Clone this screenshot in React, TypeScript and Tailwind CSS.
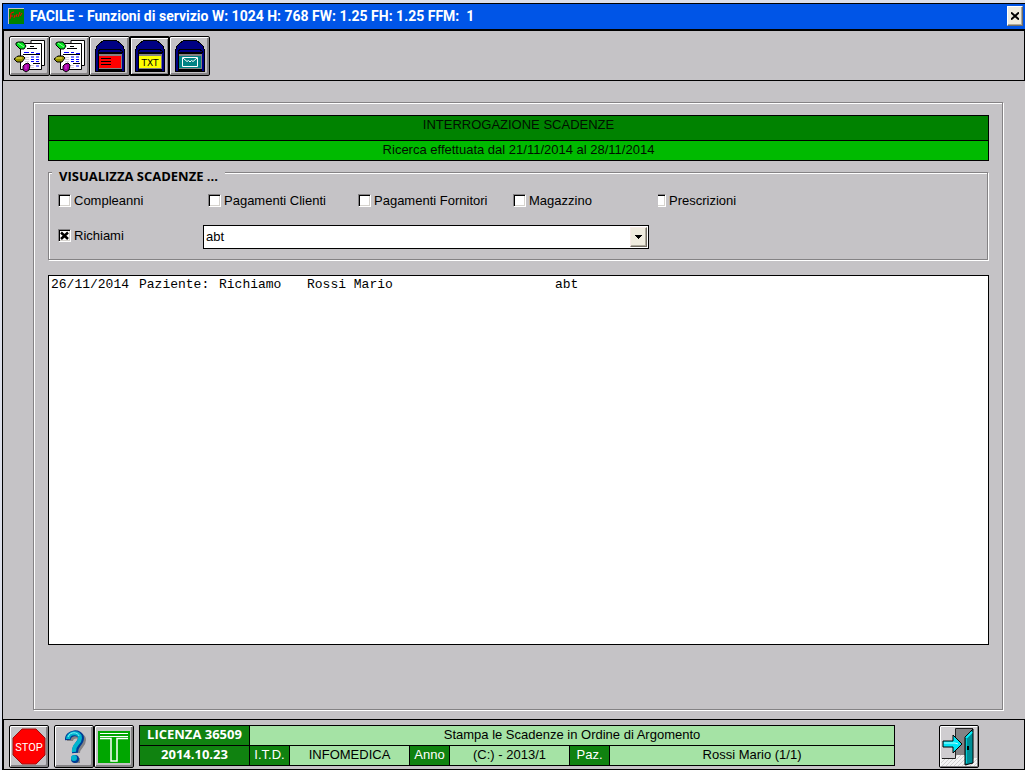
import { useState } from 'react';
import type { ReactNode } from 'react';
import clsx from 'clsx';

interface ToolButtonProps {
  label: string;
  children: ReactNode;
  selected?: boolean;
  tall?: boolean;
  className?: string;
}

const ToolButton = ({ label, children, selected, tall, className }: ToolButtonProps) => (
  <button
    type="button"
    aria-label={label}
    title={label}
    className={clsx(
      'flex shrink-0 items-center justify-center overflow-hidden rounded-[2px] border-black bg-[#c5c3c6]',
      tall ? 'h-[43px] w-[40px]' : 'h-[40px] w-[41px]',
      selected
        ? 'z-10 border-2 shadow-[inset_1px_1px_0_#fff,inset_-1px_-1px_0_#848284]'
        : 'border shadow-[inset_1px_1px_0_#fff,inset_-2px_-2px_0_#848284]',
      className
    )}
  >
    {children}
  </button>
);

const ReportIcon = () => (
  <svg width="37" height="36" viewBox="1 1 37 36" fill="none" className="shrink-0">
    <path d="M21 3.500H34.500V28.500H21Z" fill="#fff" stroke="#000" />
    <path d="M10.500 6.500H31.500V32.500H10.500Z" fill="#fff" stroke="#000" />
    <path d="M20 9.500H24M17 11.500H27" stroke="#000" />
    <path d="M14 15.500H19M21 15.500H24M26 16.500H30" stroke="#00f" />
    <path d="M13 17.500H30M23 26.500H30" stroke="#000" />
    <path d="M21 20H24M26 20H29M21 22.500H24M26 22.500H29M21 24.500H24M26 24.500H29M26 29H29" stroke="#00f" />
    <path d="M15 20.500H19M15 22.500H19M15 24.500H19M20 28.500H24M20 30.500H24" stroke="#d6d3d6" />
    <path d="M6 6L8 5H13L16 9L14 12H10L6 8Z" fill="#00e020" stroke="#000" />
    <path d="M8 6L14 10" stroke="#9f9" />
    <path d="M4 22L8 19H13L15 21L12 25H7Z" fill="#949200" stroke="#000" />
    <path d="M6 21H12" stroke="#efe75a" />
    <path d="M15 27L18 26L20 28L19 33L16 35L13 33V29Z" fill="#a500a5" stroke="#000" />
    <path d="M16 28V32" stroke="#d04ad0" />
  </svg>
);

const ArchiveIcon = ({ screen, children }: { screen: string; children: ReactNode }) => (
  <svg width="37" height="36" viewBox="2 2 37 36" className="shrink-0">
    <g shapeRendering="crispEdges">
      <path d="M6.500 35.500V14L8 10L11 7L15 4.500H27L31 7L34 10L35.500 14V35.500Z" fill="#000084" stroke="#000" />
      <path d="M9 17V15L12 13H30L33 15V17" fill="#000084" stroke="#000" />
      <path d="M9 16H33V35H9Z" fill="#000" />
      <path d="M10 18H33V33H10Z" fill="#848284" />
      <path d="M10 20H32V32H10Z" fill={screen} />
    </g>
    {children}
  </svg>
);

const StopIcon = () => (
  <svg width="36" height="39" viewBox="0 0 36 39" className="shrink-0">
    <path d="M11 2H25L34 11V28L25 37H11L2 28V11Z" fill="#f00" stroke="#9c1010" />
    <text
      x="18"
      y="24"
      textAnchor="middle"
      fill="#fff"
      fontSize="11"
      fontFamily="Roboto, 'Noto Sans', sans-serif"
    >
      STOP
    </text>
  </svg>
);

const HelpIcon = () => (
  <svg width="36" height="39" viewBox="0 0 36 39" className="shrink-0" fill="none">
    <path d="M14 14C14 7 27 7 27 13C27 19 21 19 21 26M21 31V36" stroke="#848284" strokeWidth="6" />
    <path d="M12 13C11 5 25 4 25 11C25 17 18 18 19 26" stroke="#003c94" strokeWidth="6" />
    <path d="M12 12C12 5 24 4 24 11C24 17 17 17 18 25" stroke="#00b5ce" strokeWidth="4" />
    <path d="M12 10C14 4 22 5 23 9" stroke="#7bf3ff" strokeWidth="1" />
    <circle cx="19" cy="32" r="4" fill="#003c94" />
    <circle cx="18" cy="31" r="3" fill="#00b5ce" />
  </svg>
);

const TLogo = () => (
  <svg width="36" height="39" viewBox="0 0 36 39" className="shrink-0">
    <rect x="2" y="4" width="32" height="32" fill="#00a600" />
    <path d="M4 6.500H32M4 9.500H32" fill="none" stroke="#fff" />
    <path d="M4 11.500H15V34H21V11.500H32" fill="none" stroke="#fff" strokeWidth="1.500" />
  </svg>
);

const ExitIcon = () => (
  <svg width="36" height="39" viewBox="0 0 36 39" className="shrink-0">
    <defs>
      <pattern id="floor" width="4" height="4" patternUnits="userSpaceOnUse">
        <rect width="4" height="4" fill="#f4f4f4" />
        <path d="M0 4L4 0" stroke="#d0d0d0" />
      </pattern>
    </defs>
    <path d="M0 31L14 27H36V39H0Z" fill="url(#floor)" />
    <path d="M0 0H36V31H28V28H14V31H0Z" fill="#cfcdd0" />
    <path d="M1 31.500H14.500V1.500H32" fill="none" stroke="#222" />
    <path d="M15 2H32V28H15Z" fill="#848284" />
    <path d="M24 10L32 2V36L24 38Z" fill="#008c94" stroke="#000" />
    <path d="M25 11L31 5" stroke="#00f3ff" strokeWidth="2" />
    <path d="M25.500 12V36" stroke="#00ced6" />
    <rect x="26" y="19" width="2" height="4" fill="#000" />
    <path d="M2 14H12V8L21 17L12 26V20H2Z" fill="#00e7f7" stroke="#000" />
    <path d="M3 16H14L17 17" fill="none" stroke="#bff" />
  </svg>
);

interface FilterProps {
  id: string;
  label: string;
  checked: boolean;
  onToggle: () => void;
  clipped?: boolean;
}

const FilterCheckbox = ({ id, label, checked, onToggle, clipped }: FilterProps) => (
  <div className="flex h-4 items-center gap-[3px]">
    <span className={clsx('flex shrink-0 justify-end overflow-hidden', clipped ? 'w-[8px]' : 'w-[13px]')}>
      <span className="grid shrink-0">
        <input
          id={id}
          type="checkbox"
          checked={checked}
          onChange={onToggle}
          className="col-start-1 row-start-1 size-[13px] appearance-none border border-t-[#848284] border-r-white border-b-white border-l-[#848284] bg-white shadow-[inset_1px_1px_0_#000,inset_-1px_-1px_0_#d6d3ce]"
        />
        {checked && (
          <svg viewBox="0 0 13 13" className="pointer-events-none col-start-1 row-start-1 size-[13px]">
            <path d="M3 3.500L10 10M10 3.500L3 10" stroke="#000" strokeWidth="2.500" />
          </svg>
        )}
      </span>
    </span>
    <label htmlFor={id} className="pt-[2px] whitespace-nowrap">
      {label}
    </label>
  </div>
);

const filters = [
  { id: 'compleanni', label: 'Compleanni' },
  { id: 'clienti', label: 'Pagamenti Clienti' },
  { id: 'fornitori', label: 'Pagamenti Fornitori' },
  { id: 'magazzino', label: 'Magazzino' },
  { id: 'prescrizioni', label: 'Prescrizioni', clipped: true },
];

const deadlines = [
  { date: '26/11/2014', subject: 'Paziente:', kind: 'Richiamo', name: 'Rossi Mario', note: 'abt' },
];

export default function App() {
  const [selected, setSelected] = useState<string[]>(['richiami']);

  const toggle = (id: string) => {
    setSelected((prev) => (prev.includes(id) ? prev.filter((x) => x !== id) : [...prev, id]));
  };

  return (
    <div className="flex min-h-screen flex-col bg-[#dcdfea] pt-[3px] pl-[2px] font-['Liberation_Sans',Arial,sans-serif] text-[13px] leading-4 text-black">
      <div className="flex flex-1 flex-col border-t border-l border-black bg-[#c5c3c6]">
        <header className="flex h-[27px] items-center border-b-2 border-black bg-[#0055e7] pr-[2px] pb-px pl-[5px]">
          <svg width="16" height="16" viewBox="0 0 16 16" className="shrink-0">
            <rect width="16" height="16" fill="#c5c3c6" />
            <rect x="1" y="1" width="15" height="15" fill="#008200" />
            <path d="M2 11L3 5L6 4M2 8H5M6 10L7 7M8 9L9 6M10 9L12 4M12 8L14 5" fill="none" stroke="#f00" />
          </svg>
          <h1 className="ml-[6px] flex-1 font-['Roboto','Noto_Sans',sans-serif] text-[14px] leading-4 font-bold whitespace-pre text-white">
            FACILE - Funzioni di servizio W: 1024 H: 768 FW: 1.25 FH: 1.25 FFM:  1
          </h1>
          <button
            type="button"
            aria-label="Chiudi"
            className="flex h-[20px] w-[16px] items-center justify-center border border-t-white border-r-[#736d63] border-b-[#736d63] border-l-white bg-[#efebde] shadow-[inset_-1px_-1px_0_#ada99c]"
          >
            <svg width="8" height="8" viewBox="0 0 8 8">
              <path d="M0 0.500L8 7.500M8 0.500L0 7.500" stroke="#000" strokeWidth="2" />
            </svg>
          </button>
        </header>

        <nav className="flex h-[50px] border-r border-b border-l border-black pt-[5px] pl-[5px]">
          <ToolButton label="Stampa per data">
            <ReportIcon />
          </ToolButton>
          <ToolButton label="Stampa per argomento" className="-ml-px">
            <ReportIcon />
          </ToolButton>
          <ToolButton label="Archivio" className="-ml-px">
            <ArchiveIcon screen="#f00">
              <path d="M12 22.500H22M12 25.500H22M12 28.500H22" stroke="#000" />
            </ArchiveIcon>
          </ToolButton>
          <ToolButton label="Esporta testo" selected className="-ml-px">
            <ArchiveIcon screen="#ff0">
              <text x="21" y="30" textAnchor="middle" fontSize="9" fontFamily="'DejaVu Sans', sans-serif">
                TXT
              </text>
            </ArchiveIcon>
          </ToolButton>
          <ToolButton label="Invia lettera" className="-ml-px">
            <ArchiveIcon screen="#008284">
              <path d="M13.500 21.500H28.500V30.500H13.500ZM14 22L18 25.500L19.500 24.500L21 26L22.500 24.500L24 25.500L28 22" fill="none" stroke="#fff" />
            </ArchiveIcon>
          </ToolButton>
        </nav>

        <main className="mt-[21px] mr-[22px] mb-[9px] ml-[30px] flex flex-1 flex-col border border-[#848284] pt-[12px] pr-[13px] pb-16 pl-[14px] shadow-[1px_1px_0_#fff,inset_1px_1px_0_#fff]">
          <section className="border border-black text-center text-[#001000]">
            <h2 className="h-[25px] border-b border-black bg-[#008200] pt-px">INTERROGAZIONE SCADENZE</h2>
            <p className="h-[19px] bg-[#00ba00] pt-px">Ricerca effettuata dal 21/11/2014 al 28/11/2014</p>
          </section>

          <fieldset className="relative mt-[11px] mr-px border border-[#848284] pt-[19px] pb-[10px] pl-[9px] shadow-[1px_1px_0_#fff,inset_1px_1px_0_#fff]">
            <legend className="absolute -top-[5px] left-[3px] bg-[#c5c3c6] px-[7px] font-['Open_Sans','Noto_Sans',sans-serif] font-bold">
              VISUALIZZA SCADENZE ...
            </legend>
            <div className="grid grid-cols-[150px_150px_155px_145px_1fr]">
              {filters.map((filter) => (
                <FilterCheckbox
                  key={filter.id}
                  {...filter}
                  checked={selected.includes(filter.id)}
                  onToggle={() => toggle(filter.id)}
                />
              ))}
            </div>
            <div className="mt-[17px] flex">
              <div className="w-[145px] pt-[2px]">
                <FilterCheckbox
                  id="richiami"
                  label="Richiami"
                  checked={selected.includes('richiami')}
                  onToggle={() => toggle('richiami')}
                />
              </div>
              <div className="relative w-[446px]">
                <select
                  aria-label="Tipo di richiamo"
                  defaultValue="abt"
                  className="block h-[24px] w-full appearance-none border border-black bg-white pl-[2px]"
                >
                  <option value="abt">abt</option>
                </select>
                <span className="pointer-events-none absolute top-[2px] right-[2px] flex h-[20px] w-[17px] items-center justify-center border border-t-[#f7ebe7] border-r-[#736d63] border-b-[#736d63] border-l-[#f7ebe7] bg-[#efebde] shadow-[inset_-1px_-1px_0_#ada99c]">
                  <svg width="7" height="4" viewBox="0 0 7 4" shapeRendering="crispEdges">
                    <path d="M0 0H7L3.500 4Z" />
                  </svg>
                </span>
              </div>
            </div>
          </fieldset>

          <div className="mt-[15px] flex-1 border border-black bg-white px-[2px] pt-px">
            <table className="w-full table-fixed border-collapse text-left font-['Liberation_Mono','Courier_New',monospace] text-[13px]">
              <colgroup>
                <col className="w-[88px]" />
                <col className="w-[80px]" />
                <col className="w-[88px]" />
                <col className="w-[248px]" />
                <col />
              </colgroup>
              <tbody>
                {deadlines.map((row) => (
                  <tr key={row.date}>
                    <td>{row.date}</td>
                    <td>{row.subject}</td>
                    <td>{row.kind}</td>
                    <td>{row.name}</td>
                    <td>{row.note}</td>
                  </tr>
                ))}
              </tbody>
            </table>
          </div>
        </main>

        <footer className="flex h-[51px] border border-black py-[5px] pl-[5px]">
          <ToolButton label="Stop" tall>
            <StopIcon />
          </ToolButton>
          <ToolButton label="Aiuto" tall className="ml-[5px]">
            <HelpIcon />
          </ToolButton>
          <ToolButton label="Tabelle" tall>
            <TLogo />
          </ToolButton>
          <div className="ml-[5px] grid h-[41px] flex-1 grid-cols-[109px_39px_119px_39px_119px_39px_1fr] grid-rows-[19px_19px] gap-px bg-black p-px text-center leading-[18px]">
            <strong className="bg-[#108210] font-['Open_Sans','Noto_Sans',sans-serif] leading-4 text-white">
              LICENZA 36509
            </strong>
            <span className="col-span-6 bg-[#a5e3a5]">Stampa le Scadenze in Ordine di Argomento</span>
            <strong className="bg-[#108210] font-['Open_Sans','Noto_Sans',sans-serif] leading-4 text-white">
              2014.10.23
            </strong>
            <span className="bg-[#108210] text-white">I.T.D.</span>
            <span className="bg-[#a5e3a5]">INFOMEDICA</span>
            <span className="bg-[#108210] text-white">Anno</span>
            <span className="bg-[#a5e3a5]">(C:) - 2013/1</span>
            <span className="bg-[#108210] text-white">Paz.</span>
            <span className="bg-[#a5e3a5]">Rossi Mario (1/1)</span>
          </div>
          <ToolButton label="Esci" tall className="mr-[45px] ml-[44px]">
            <ExitIcon />
          </ToolButton>
        </footer>
      </div>
    </div>
  );
}
